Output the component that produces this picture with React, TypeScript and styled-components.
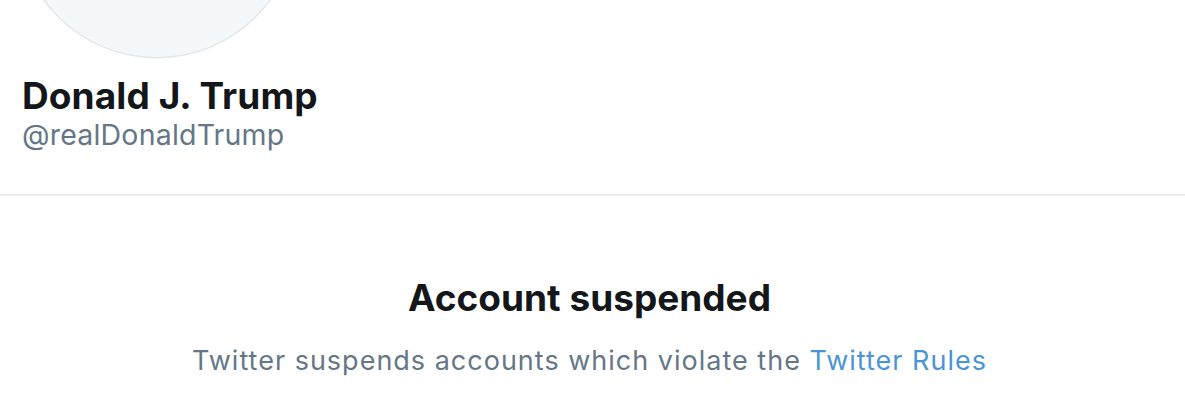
import React from "react";
import styled, { createGlobalStyle } from "styled-components";

const GlobalStyle = createGlobalStyle`
  html, body {
    margin: 0;
    padding: 0;
    background: #ffffff;
    font-family: Inter, "Noto Sans", "Liberation Sans", sans-serif;
    -webkit-font-smoothing: antialiased;
  }
  #root {
    width: 1185px;
    height: 395px;
    overflow: hidden;
  }
`;

const Page = styled.main`
  display: flex;
  flex-direction: column;
  width: 100%;
  height: 100%;
  background: #ffffff;
`;

const ProfileHeader = styled.section`
  display: flex;
  flex-direction: column;
  align-items: flex-start;
  padding: 0 22px;
`;

const Avatar = styled.div`
  width: 278px;
  height: 278px;
  margin-top: -221px;
  margin-left: -4px;
  border-radius: 50%;
  background: #f5f8fa;
  box-shadow: 0 0 0 1.5px #e3e8ec;
  flex-shrink: 0;
`;

const DisplayName = styled.h1`
  margin: 19px 0 0;
  font-size: 37px;
  line-height: 40px;
  font-weight: 700;
  letter-spacing: 0.1px;
  color: #14171a;
`;

const Handle = styled.div`
  margin: 2px 0 0;
  font-size: 28.5px;
  line-height: 34px;
  font-weight: 400;
  letter-spacing: 0.2px;
  color: #657786;
`;

const Divider = styled.hr`
  margin: 42px 0 0;
  border: none;
  height: 2px;
  background: #e9ecee;
  width: 100%;
`;

const Notice = styled.section`
  display: flex;
  flex-direction: column;
  align-items: center;
  padding: 80px 6px 0 0;
  text-align: center;
`;

const NoticeTitle = styled.h2`
  margin: 0;
  font-size: 37px;
  line-height: 44px;
  font-weight: 700;
  color: #14171a;
`;

const NoticeText = styled.p`
  margin: 25px 0 0;
  font-size: 27px;
  line-height: 32px;
  font-weight: 400;
  letter-spacing: 1px;
  color: #657786;
`;

const RulesLink = styled.a`
  color: #4a94d6;
  text-decoration: none;
`;

export default function App() {
  return (
    <>
      <GlobalStyle />
      <Page>
        <ProfileHeader>
          <Avatar />
          <DisplayName>Donald J. Trump</DisplayName>
          <Handle>@realDonaldTrump</Handle>
        </ProfileHeader>
        <Divider />
        <Notice>
          <NoticeTitle>Account suspended</NoticeTitle>
          <NoticeText>
            Twitter suspends accounts which violate the{" "}
            <RulesLink href="#">Twitter Rules</RulesLink>
          </NoticeText>
        </Notice>
      </Page>
    </>
  );
}
